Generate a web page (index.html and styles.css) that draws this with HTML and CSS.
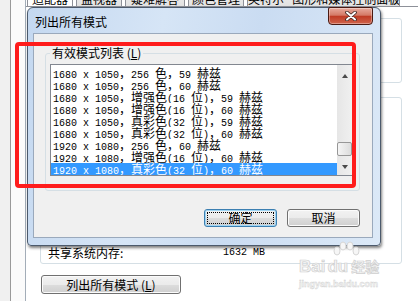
FILE: index.html
```html
<!DOCTYPE html>
<html lang="zh-CN">

<head>
  <meta charset="UTF-8">
  <title>列出所有模式</title>
  <link rel="stylesheet" href="styles.css">
</head>

<body>
  <div class="window">
    <div class="side"></div>
    <div class="side-inner"></div>

    <div class="main">
      <div class="tabs">
        <div class="tab active t1">适配器</div>
        <div class="tab t2">监视器</div>
        <div class="tab t3">疑难解答</div>
        <div class="tab t4">颜色管理</div>
        <div class="tab t5">英特尔® 图形和媒体控制面板</div>
      </div>

      <div class="page">
        <div class="group g1"></div>
        <div class="group g2">
          <span class="mem-label">共享系统内存:</span>
          <span class="mem-value">1632 MB</span>
        </div>
        <button class="btn list-btn">列出所有模式 (<u>L</u>)</button>
      </div>
    </div>

    <!-- the modal dialog on top of the properties window -->
    <div class="dialog">
      <div class="titlebar">
        <span class="title">列出所有模式</span>
        <button class="close">
          <svg width="12" height="10" viewBox="0 0 12 10">
            <path d="M2 1.5 L10 8.5 M10 1.5 L2 8.5" stroke="#3a2622" stroke-width="3.6" stroke-linecap="round" />
            <path d="M2 1.5 L10 8.5 M10 1.5 L2 8.5" stroke="#fff" stroke-width="2" stroke-linecap="round" />
          </svg>
        </button>
      </div>

      <div class="body">
        <fieldset class="modes">
          <legend>有效模式列表 (<u>L</u>)</legend>
          <div class="listbox">
            <ul class="rows">
              <li><span class="a">1680 x 1050</span>，<span class="a">256 </span>色，<span class="a">59 </span>赫兹</li>
              <li><span class="a">1680 x 1050</span>，<span class="a">256 </span>色，<span class="a">60 </span>赫兹</li>
              <li><span class="a">1680 x 1050</span>，增强色<span class="a">(16 </span>位<span class="a">)</span>，<span class="a">59 </span>赫兹</li>
              <li><span class="a">1680 x 1050</span>，增强色<span class="a">(16 </span>位<span class="a">)</span>，<span class="a">60 </span>赫兹</li>
              <li><span class="a">1680 x 1050</span>，真彩色<span class="a">(32 </span>位<span class="a">)</span>，<span class="a">59 </span>赫兹</li>
              <li><span class="a">1680 x 1050</span>，真彩色<span class="a">(32 </span>位<span class="a">)</span>，<span class="a">60 </span>赫兹</li>
              <li><span class="a">1920 x 1080</span>，<span class="a">256 </span>色，<span class="a">60 </span>赫兹</li>
              <li><span class="a">1920 x 1080</span>，增强色<span class="a">(16 </span>位<span class="a">)</span>，<span class="a">60 </span>赫兹</li>
              <li class="selected"><span class="a">1920 x 1080</span>，真彩色<span class="a">(32 </span>位<span class="a">)</span>，<span class="a">60 </span>赫兹</li>
            </ul>
            <div class="scrollbar">
              <div class="arrow up"><i></i></div>
              <div class="track-top"></div>
              <div class="thumb"></div>
              <div class="track-bottom"></div>
              <div class="arrow down"><i></i></div>
            </div>
          </div>
        </fieldset>

        <div class="actions">
          <button class="btn ok">确定</button>
          <button class="btn">取消</button>
        </div>
      </div>
    </div>

    <!-- annotation drawn over the screenshot -->
    <div class="marker"></div>

    <div class="watermark">
      <svg class="paw" width="30" height="16" viewBox="0 0 30 16">
        <ellipse cx="6" cy="10" rx="3" ry="4" fill="#f6f6f6" stroke="#d6d6d6" />
        <ellipse cx="12" cy="5" rx="3" ry="4" fill="#f6f6f6" stroke="#d6d6d6" />
        <ellipse cx="19" cy="5" rx="3" ry="4" fill="#f6f6f6" stroke="#d6d6d6" />
        <ellipse cx="25" cy="10" rx="3" ry="4" fill="#f6f6f6" stroke="#d6d6d6" />
      </svg>
      <div class="logo"><span>Bai</span><span class="du">du</span><span class="jy">经验</span></div>
      <div class="site">jingyan.baidu.com</div>
    </div>
  </div>
</body>

</html>
```

FILE: styles.css
```css
* {
  box-sizing: border-box;
}

body {
  margin: 0;
  width: 418px;
  height: 301px;
  overflow: hidden;
  background: #fff;
  font-family: "Noto Sans CJK SC", "Noto Sans", sans-serif;
  font-size: 12px;
  color: #000;
}

.window {
  position: relative;
  display: flex;
  height: 301px;
}

.side {
  width: 11px;
  background: #f0f0f0;
  border-right: 1px solid #9a9a9a;
}

.side-inner {
  width: 15px;
  background: #fbfbfb;
  border-right: 1px solid #a3adb8;
}

.main {
  flex: 1;
  display: flex;
  flex-direction: column;
}

/* tab strip, only its lower edge is visible */
.tabs {
  display: flex;
  height: 6px;
  padding-left: 1px;
  overflow: hidden;
  background: #fff;
}

.tab {
  height: 20px;
  margin-top: -14px;
  margin-right: 3px;
  padding-top: 6px;
  line-height: 12px;
  text-align: center;
  white-space: nowrap;
  overflow: hidden;
  border: 1px solid #8e9199;
  border-bottom: 0;
  background: linear-gradient(#f2f2f2, #e2e2e2);
}

.tab.active {
  background: #fff;
}

.t1 { width: 46px; }
.t2 { width: 46px; }
.t3 { width: 60px; }
.t4 { width: 56px; }
.t5 { width: 153px; }

.page {
  flex: 1;
  background: #fff;
  border-top: 1px solid #8e9199;
  padding: 11px 16px 0 14px;
}

.group {
  border: 1px solid #d5dfe5;
  border-radius: 3px;
}

.g1 {
  height: 65px;
}

.g2 {
  height: 167px;
  margin-top: 14px;
  display: flex;
  align-items: flex-end;
  padding: 0 0 4px 7px;
  line-height: 12px;
}

.mem-label {
  width: 175px;
}

.mem-value {
  font-family: "Liberation Mono", monospace;
  font-size: 10px;
}

.btn {
  font-family: "Noto Sans CJK SC", sans-serif;
  font-size: 12px;
  line-height: 14px;
  color: #000;
  padding: 0;
  border: 1px solid #707070;
  border-radius: 3px;
  background: linear-gradient(#f2f2f2 0%, #ebebeb 50%, #dddddd 51%, #cfcfcf 100%);
  box-shadow: inset 0 0 0 1px #fbfbfb;
}

.btn u {
  text-underline-offset: 1px;
}

.list-btn {
  display: block;
  width: 140px;
  height: 19px;
  margin: 11px 0 0 1px;
}

/* dialog */
.dialog {
  position: absolute;
  left: 27px;
  top: 7px;
  width: 354px;
  height: 239px;
  display: flex;
  flex-direction: column;
  border: 1px solid #4c5a6c;
  border-radius: 6px 6px 4px 4px;
  background: linear-gradient(100deg, #c4d8f0 0%, #d6e5f6 35%, #cadcf2 60%, #dce9f7 100%);
  box-shadow: 1px 2px 3px rgba(0, 0, 0, 0.5);
}

.titlebar {
  height: 25px;
  display: flex;
  justify-content: space-between;
  align-items: flex-start;
}

.title {
  padding: 7px 0 0 7px;
  line-height: 14px;
}

.close {
  width: 45px;
  height: 18px;
  margin: -1px 7px 0 0;
  padding: 0;
  display: flex;
  align-items: center;
  justify-content: center;
  border: 1px solid #4a1a12;
  border-radius: 2px 2px 4px 4px;
  background: linear-gradient(#e8ab9e 0%, #d47a66 45%, #bf3c25 52%, #d0644c 100%);
  box-shadow: inset 0 0 0 1px rgba(255, 255, 255, 0.35);
}

.body {
  flex: 1;
  margin: 0 7px 7px 5px;
  background: #f0f0f0;
  border: 1px solid #9aa9bc;
  display: flex;
  flex-direction: column;
}

.modes {
  margin: 12px 12px 0 11px;
  padding: 4px 6px 14px 4px;
  min-width: 0;
  border: 1px solid #d5dfe5;
  border-radius: 3px;
}

.modes legend {
  padding: 0 2px;
  line-height: 14px;
}

.listbox {
  display: flex;
  height: 112px;
  border: 1px solid #828790;
  background: #fff;
}

.rows {
  flex: 1;
  list-style: none;
  margin: 0;
  padding: 2px 0 0 0;
}

.rows li {
  height: 12px;
  line-height: 12px;
  padding-left: 2px;
  white-space: pre;
  overflow: hidden;
}

.rows li.selected {
  background: #3399ff;
  color: #fff;
}

.rows .a {
  font-family: "Liberation Mono", monospace;
  font-size: 10px;
}

.scrollbar {
  width: 15px;
  display: flex;
  flex-direction: column;
  background: linear-gradient(to right, #e6e6e6, #f0f0f0);
}

.arrow {
  display: flex;
  justify-content: center;
}

.arrow i {
  width: 0;
  height: 0;
  border-left: 3.5px solid transparent;
  border-right: 3.5px solid transparent;
}

.arrow.up {
  height: 17px;
  padding-top: 9px;
}

.arrow.up i {
  border-bottom: 4px solid #4a4a4a;
}

.arrow.down {
  height: 14px;
  padding-top: 4px;
}

.arrow.down i {
  border-top: 4px solid #4a4a4a;
}

.track-top {
  height: 60px;
}

.thumb {
  height: 14px;
  border: 1px solid #979797;
  border-radius: 2px;
  background: linear-gradient(to right, #f5f5f5, #dcdcdc);
}

.track-bottom {
  flex: 1;
}

.actions {
  display: flex;
  justify-content: flex-end;
  gap: 10px;
  margin-top: 18px;
  padding-right: 12px;
}

.actions .btn {
  width: 73px;
  height: 18px;
}

.actions .ok {
  border-color: #3c7fb1;
  box-shadow: inset 0 0 0 1px #9fd5f4;
  outline: 1px dotted #000;
  outline-offset: -4px;
}

/* red annotation box */
.marker {
  position: absolute;
  left: 15px;
  top: 42px;
  width: 341px;
  height: 146px;
  border: 4px solid #ff1c1c;
  border-radius: 4px;
}

.watermark {
  position: absolute;
  left: 299px;
  top: 241px;
  width: 96px;
  font-family: "Liberation Sans", sans-serif;
  color: #f5f5f5;
  -webkit-text-stroke: 0.7px #cfcfcf;
}

.paw {
  display: block;
  margin-left: 32px;
}

.logo {
  font-size: 17px;
  font-weight: bold;
  line-height: 18px;
  white-space: nowrap;
}

.logo .du {
  margin-left: 2px;
}

.logo .jy {
  margin-left: 3px;
  font-family: "Noto Sans CJK SC", sans-serif;
  font-size: 14px;
}

.site {
  font-size: 9px;
  font-weight: bold;
  line-height: 10px;
  margin-top: 3px;
  -webkit-text-stroke: 0.4px #d0d0d0;
}
```
